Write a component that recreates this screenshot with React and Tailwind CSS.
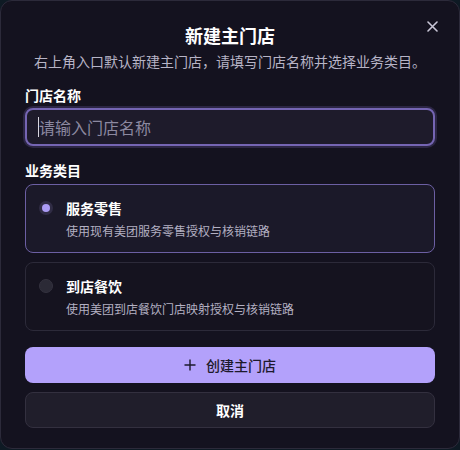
import React from "react";

export default function App() {
  const font = { fontFamily: '"Noto Sans CJK SC", "Noto Sans", sans-serif' };
  return (
    <div className="w-[460px] h-[450px] bg-[#0e1a24] overflow-hidden" style={font}>
      <div className="relative w-[460px] h-[449px] rounded-xl border border-[#2c2a3a] bg-[#14121f] px-6 pt-[20px] flex flex-col">
        <button className="absolute right-[19px] top-[17px] w-4 h-4 flex items-center justify-center text-[#c9c6d6]">
          <svg width="11" height="11" viewBox="0 0 11 11" fill="none" stroke="currentColor" strokeWidth="1.6" strokeLinecap="round">
            <path d="M1 1L10 10M10 1L1 10" />
          </svg>
        </button>
        <h1 className="text-center text-[18px] leading-[28px] font-bold text-white">新建主门店</h1>
        <p className="mt-[2px] text-center text-[14px] leading-[20px] text-[#b7b4c6]">右上角入口默认新建主门店，请填写门店名称并选择业务类目。</p>

        <div className="mt-[14px] text-[14px] leading-[20px] font-semibold text-white">门店名称</div>
        <div className="mt-[3px] h-[38px] rounded-lg border-2 border-[#7565b3] bg-[#1e1b2b] flex items-center px-[11px] shadow-[0_0_0_2px_rgba(117,101,179,0.25)]">
          <span className="w-px h-[20px] bg-[#d8d6e0]"></span>
          <span className="text-[16px] leading-[24px] text-[#8c89a0]">请输入门店名称</span>
        </div>

        <div className="mt-[14px] text-[14px] leading-[20px] font-semibold text-white">业务类目</div>
        <div className="mt-[4px] flex flex-col gap-[9px]">
          <div className="h-[69px] rounded-lg border border-[#6c5fa3] bg-[#1b1929] px-[13px] pt-[13px] flex gap-[13px]">
            <div className="mt-[3px] w-[14px] h-[14px] rounded-full bg-[#302c45] flex items-center justify-center">
              <div className="w-[8px] h-[8px] rounded-full bg-[#ab9bf5]"></div>
            </div>
            <div className="flex flex-col">
              <div className="text-[14px] leading-[20px] font-bold text-white">服务零售</div>
              <div className="mt-[5px] text-[12px] leading-[16px] text-[#b3b0c2]">使用现有美团服务零售授权与核销链路</div>
            </div>
          </div>
          <div className="h-[69px] rounded-lg border border-[#2c2a39] bg-[#15131f] px-[13px] pt-[13px] flex gap-[13px]">
            <div className="mt-[3px] w-[14px] h-[14px] rounded-full bg-[#2b2a36] border border-[#34323f]"></div>
            <div className="flex flex-col">
              <div className="text-[14px] leading-[20px] font-bold text-white">到店餐饮</div>
              <div className="mt-[5px] text-[12px] leading-[16px] text-[#b3b0c2]">使用美团到店餐饮门店映射授权与核销链路</div>
            </div>
          </div>
        </div>

        <button className="mt-[16px] h-[36px] rounded-lg bg-[#b3a1fb] flex items-center justify-center gap-[10px] text-[#1d1a2c] text-[14px] font-medium">
          <svg width="12" height="12" viewBox="0 0 12 12" fill="none" stroke="currentColor" strokeWidth="1.4">
            <path d="M6 0.5V11.5M0.5 6H11.5" />
          </svg>
          <span>创建主门店</span>
        </button>
        <button className="mt-[9px] h-[36px] rounded-lg border border-[#33303f] bg-[#201e2b] flex items-center justify-center text-white text-[14px] font-bold">
          取消
        </button>
      </div>
    </div>
  );
}
